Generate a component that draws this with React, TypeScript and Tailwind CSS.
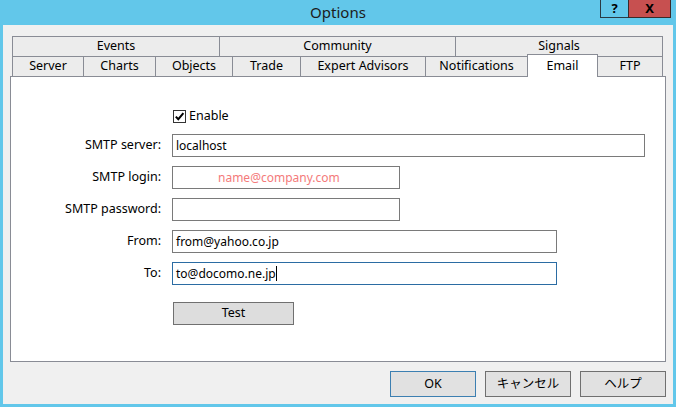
// App.tsx

const font = { fontFamily: '"Noto Sans", "Noto Sans CJK JP", sans-serif' };

interface Tab {
    label: string;
    w: string;
}

const bottomTabs: Tab[] = [
    { label: "Server", w: "w-[71px]" },
    { label: "Charts", w: "w-[72px]" },
    { label: "Objects", w: "w-[77px]" },
    { label: "Trade", w: "w-[68px]" },
    { label: "Expert Advisors", w: "w-[125px]" },
    { label: "Notifications", w: "w-[102px]" },
];

function Field({
    label,
    width,
    children,
    focused,
}: {
    label: string;
    width: string;
    children?: React.ReactNode;
    focused?: boolean;
}) {
    return (
        <div className="flex items-center h-[23px]">
            <div className="w-[151px] text-right text-[12.5px] text-black pr-px">
                {label}
            </div>
            <div
                className={`
                    ml-[10px]
                    h-[23px]
                    ${width}
                    bg-white
                    border
                    ${focused ? "border-[#2b6ca3]" : "border-[#7a7a7a]"}
                    flex items-center
                    pl-[3px]
                    text-[12px]
                    text-black
                `}
            >
                {children}
            </div>
        </div>
    );
}

export default function App() {
    return (
        <div
            style={font}
            className="w-[676px] h-[407px] bg-[#62c7ea] flex flex-col px-[3px] pb-[3px] select-none"
        >
            {/* title bar */}
            <div className="relative h-[25px] flex items-center justify-center">
                <span className="text-[15px] text-[#1c1c1c] -mt-px">Options</span>

                <div className="absolute top-0 right-[2px] flex h-[18px]">
                    <div className="w-[28px] h-full border-l border-b border-[#2a3a44] flex items-center justify-center text-[13px] font-bold text-black">
                        ?
                    </div>
                    <div className="w-[43px] h-full bg-[#c75050] border-l border-b border-r border-[#3a2a2a] flex items-center justify-center text-[13px] font-bold text-black">
                        X
                    </div>
                </div>
            </div>

            {/* body */}
            <div className="flex-1 bg-[#f0f0f0] px-[7px] pt-[11px] flex flex-col">

                {/* tabs */}
                <div className="ml-[2px] w-[651px]">
                    <div className="flex h-[20px] text-[12.5px] text-black">
                        <div className="w-[207px] border-l border-t border-[#898c95] bg-[#ececec] flex items-center justify-center">
                            Events
                        </div>
                        <div className="w-[236px] border-l border-t border-[#898c95] bg-[#ececec] flex items-center justify-center">
                            Community
                        </div>
                        <div className="w-[208px] border-l border-t border-r border-[#898c95] bg-[#ececec] flex items-center justify-center">
                            Signals
                        </div>
                    </div>

                    <div className="flex items-start h-[20px] text-[12.5px] text-black">
                        {bottomTabs.map((t) => (
                            <div
                                key={t.label}
                                className={`${t.w} h-[20px] border-l border-t border-[#898c95] bg-[#ececec] flex items-center justify-center`}
                            >
                                {t.label}
                            </div>
                        ))}

                        <div className="relative z-10 w-[71px] -mr-px -mt-[2px] h-[23px] border-l border-t border-r border-[#898c95] bg-white flex justify-center pt-[2px]">
                            Email
                        </div>

                        <div className="w-[66px] h-[20px] border-l border-t border-r border-[#898c95] bg-[#ececec] flex items-center justify-center">
                            FTP
                        </div>
                    </div>
                </div>

                {/* panel */}
                <div className="h-[286px] border border-[#898c95] bg-white pt-[33px] flex flex-col">

                    <div className="flex items-center h-[13px]">
                        <div className="w-[151px]" />
                        <div className="ml-[11px] w-[13px] h-[13px] border border-[#333333] bg-white flex items-center justify-center">
                            <svg width="11" height="11" viewBox="0 0 11 11">
                                <path
                                    d="M1.8 5.6 L4.3 8.2 L9.4 2.2"
                                    fill="none"
                                    stroke="#000"
                                    strokeWidth="2"
                                />
                            </svg>
                        </div>
                        <span className="ml-[3px] text-[12.5px] text-black">Enable</span>
                    </div>

                    <div className="mt-[11px] flex flex-col gap-[9px]">
                        <Field label="SMTP server:" width="w-[473px]">
                            localhost
                        </Field>

                        <Field label="SMTP login:" width="w-[228px]">
                            <span className="ml-[42px] text-[#f47a7a]">name@company.com</span>
                        </Field>

                        <Field label="SMTP password:" width="w-[228px]" />

                        <Field label="From:" width="w-[385px]">
                            from@yahoo.co.jp
                        </Field>

                        <Field label="To:" width="w-[385px]" focused>
                            to@docomo.ne.jp
                            <span className="inline-block w-px h-[15px] bg-black" />
                        </Field>
                    </div>

                    <div className="mt-[17px] flex">
                        <div className="w-[151px]" />
                        <button className="ml-[11px] w-[121px] h-[23px] bg-[#dddddd] border border-[#707070] text-[12.5px] text-black">
                            Test
                        </button>
                    </div>
                </div>

                {/* dialog buttons */}
                <div className="mt-[9px] flex justify-end gap-[9px] text-[12.5px] text-black">
                    <button className="w-[86px] h-[26px] bg-[#e1e1e1] border border-[#3c7fb1]">
                        OK
                    </button>
                    <button className="w-[86px] h-[26px] bg-[#e1e1e1] border border-[#707070]">
                        キャンセル
                    </button>
                    <button className="w-[86px] h-[26px] bg-[#e1e1e1] border border-[#707070]">
                        ヘルプ
                    </button>
                </div>
            </div>
        </div>
    );
}
